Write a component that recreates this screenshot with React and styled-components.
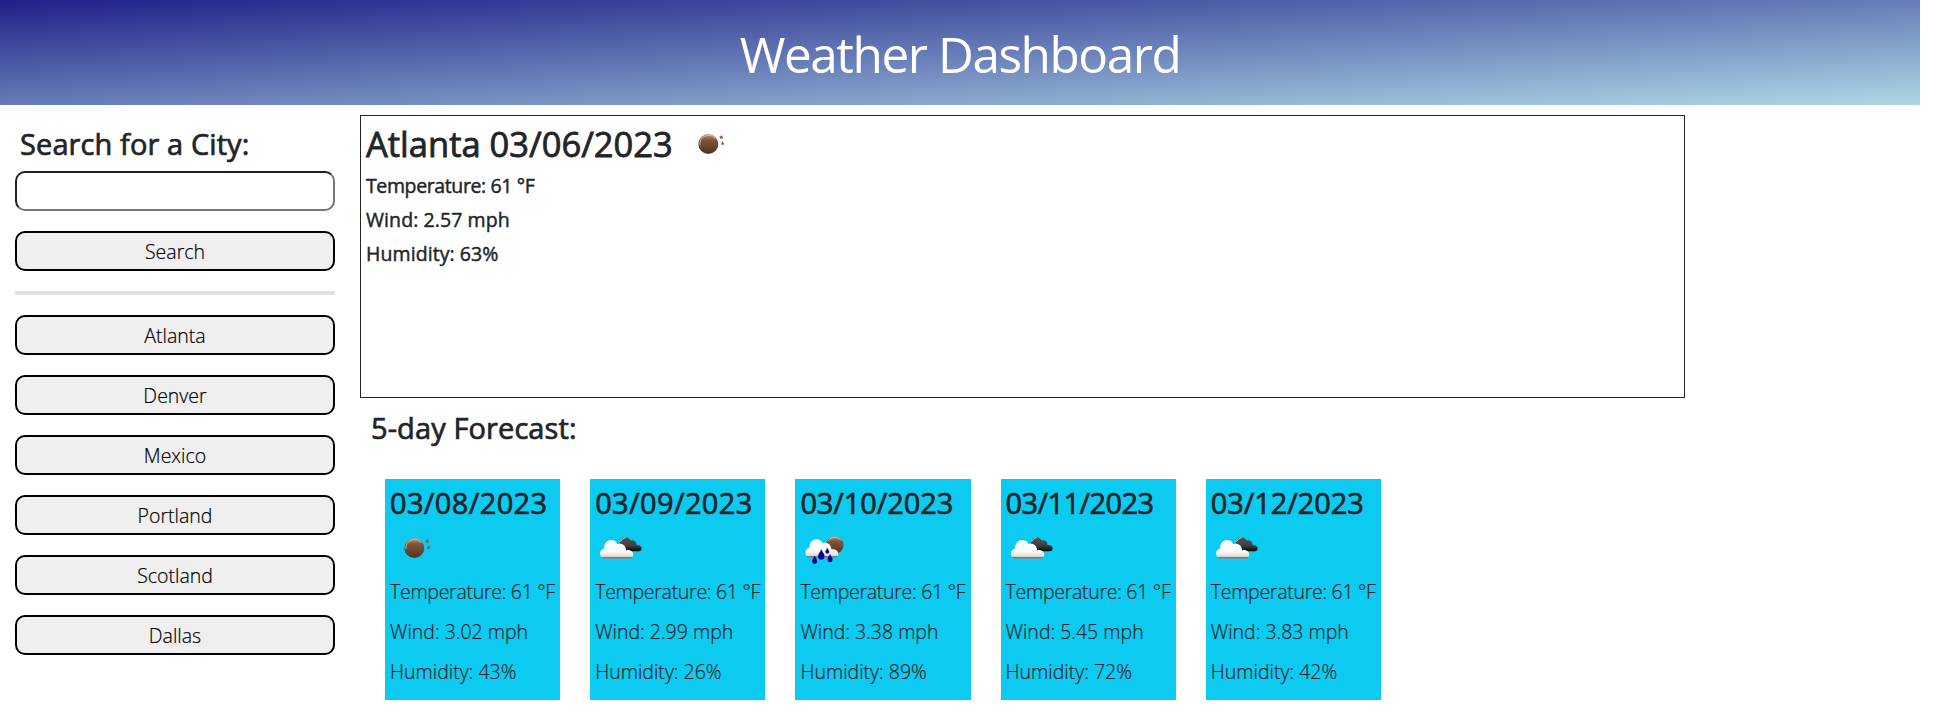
import React from "react";
import styled, { createGlobalStyle } from "styled-components";

const Global = createGlobalStyle`
  *, *::before, *::after { box-sizing: border-box; }
  body { margin: 0; background: #fff; color: #212529; font-family: "Segoe UI", "Open Sans", "Noto Sans", sans-serif; font-size: 20px; line-height: 30px; overflow: hidden; }
  h1, h2, h3, p { margin: 0; }
`;
const Header = styled.header`
  width: 1920px; height: 105px; display: flex; justify-content: center; padding-top: 25px;
  background: linear-gradient(to bottom right, #202088, lightblue);
`;
const Title = styled.h1`
  color: #fff; font-weight: 400; font-size: 49.5px; line-height: 59px; letter-spacing: -1.45px; white-space: nowrap;
`;
const Page = styled.div`display: flex; width: 1920px; align-items: flex-start;`;
const Sidebar = styled.aside`
  width: 320px; margin: 21px 0 0 15px; display: flex; flex-direction: column; gap: 20px;
`;
const Field = styled.label`display: flex; flex-direction: column; gap: 9px;`;
const Heading = styled.h2`
  font-weight: 400; font-size: 29px; line-height: 36px; white-space: nowrap;
  padding-left: 5px; letter-spacing: .1px; -webkit-text-stroke: .7px currentColor;
`;
const Input = styled.input`
  width: 100%; height: 40px; border: 2px inset #767676; border-radius: 10px; background: #fff; font: inherit; padding: 0 8px;
`;
const Button = styled.button`
  width: 100%; height: 40px; border: 2px solid #000; border-radius: 10px; background: #efefef; color: #000;
  font: inherit; font-size: 19.5px; line-height: 30px; padding: 1px 0 0; font-weight: 300; -webkit-text-stroke: .2px currentColor;
`;
const Rule = styled.hr`width: 100%; height: 4px; margin: 0; border: 0; background: #dee2e6;`;
const Main = styled.main`margin: 10px 0 0 25px; width: 1325px;`;
const Current = styled.section`height: 283px; border: 1px solid #212529; padding: 7px 5px;`;
const CurrentTop = styled.div`display: flex; align-items: center; height: 42px; margin-bottom: 4px; gap: 11px;`;
const City = styled.h2`font-size: 34.5px; line-height: 42px; font-weight: 400; white-space: nowrap; -webkit-text-stroke: .8px currentColor;`;
const Reading = styled.p`
  font-size: 19.5px; line-height: 34px; font-weight: 400; white-space: nowrap;
  letter-spacing: ${(p) => (p.$tight ? "-.38px" : ".08px")}; -webkit-text-stroke: .45px currentColor;
`;
const ForecastHead = styled.div`padding: 12px 0 0 6px;`;
const Days = styled.div`display: flex; gap: 30px; padding: 33px 0 0 25px;`;
const Day = styled.article`width: 175.2px; height: 221px; background: #0dcaf0; padding: 6px 5px;`;
const DayDate = styled.h3`
  font-size: 29px; line-height: 36px; margin-bottom: 2px; font-weight: 400; white-space: nowrap;
  letter-spacing: ${(p) => p.$track}px; -webkit-text-stroke: .7px currentColor;
`;
const Metrics = styled.div`margin-top: -1px;`;
const Metric = styled.p`
  font-size: 19.5px; line-height: 40px; font-weight: 300; white-space: nowrap;
  letter-spacing: ${(p) => (p.$tight ? "-.28px" : "0")}; -webkit-text-stroke: .2px currentColor;
`;
const Icon = styled.svg`display: block; width: 50px; height: 50px; flex: none;`;

const Defs = () => (
  <defs>
    <linearGradient id="moon" x1="0" y1="0" x2="0" y2="1">
      <stop offset="0" stopColor="#b89880" /><stop offset=".3" stopColor="#805539" /><stop offset="1" stopColor="#4d3322" />
    </linearGradient>
    <linearGradient id="white" x1="0" y1="0" x2="0" y2="1">
      <stop offset="0" stopColor="#fff" /><stop offset=".6" stopColor="#fbfbfb" /><stop offset=".88" stopColor="#ddd" /><stop offset=".9" stopColor="#777" /><stop offset="1" stopColor="#888" />
    </linearGradient>
    <linearGradient id="dark" x1="0" y1="0" x2="0" y2="1">
      <stop offset="0" stopColor="#555" /><stop offset=".6" stopColor="#3e3e3e" /><stop offset="1" stopColor="#080808" />
    </linearGradient>
  </defs>
);
const star = "M0-2.4 .7-.8 2.3-.7 1.1.4 1.5 2 0 1.1-1.5 2-1.1.4-2.3-.7-.7-.8Z";
const cloud = "M10 35.7C7 35.7 5 33.4 5 30.6C5 28 6.7 26.2 9 25.6C8.8 21 11.9 17 16 17C19.2 17 21.4 18.6 22.4 21.1C26.8 19.5 31 22.4 31.1 27.2C35 26.6 38.3 28.6 38.3 31.8C38.3 34.2 36.7 35.7 34.5 35.7Z";
const drop = "M0-5C.8-2.6 3-1 3 1.7A3 3 0 0 1-3 1.7C-3-1-.8-2.6 0-5Z";

const NightIcon = () => (
  <Icon viewBox="0 0 50 50"><Defs />
    <circle cx="24.3" cy="25" r="10" fill="url(#moon)" />
    <path d="M16 26A8.6 8.6 0 0 1 31.5 20" fill="none" stroke="#e6c9b5" strokeWidth=".8" />
    <path d={star} fill="#805a42" transform="translate(37.3 18.2)" />
    <path d={star} fill="#805a42" transform="translate(38.6 24.4) scale(.9)" />
  </Icon>
);
const CloudIcon = () => (
  <Icon viewBox="0 0 50 50"><Defs />
    <path d="M25 28.3C24 18 26 14.3 30.4 14.3C33 14.3 34.6 15.6 35.5 17.5C38.6 16.6 41.6 18.7 41.6 22C44.5 21.7 46.7 23 46.7 25.3C46.7 27.2 45.5 28.3 43.8 28.3Z" fill="url(#dark)" />
    <path d="M25.7 18.7C26.5 16.4 28.2 15 30.6 14.8" fill="none" stroke="#c4d4d8" strokeWidth="1" />
    <path d={cloud} fill="url(#white)" />
  </Icon>
);
const RainIcon = () => (
  <Icon viewBox="0 0 50 50"><Defs />
    <circle cx="34.7" cy="22" r="8.8" fill="url(#moon)" />
    <path d="M28.2 18A7.8 7.8 0 0 1 41 17.5" fill="none" stroke="#d9c5b8" strokeWidth=".8" />
    <path d={cloud} fill="url(#white)" transform="translate(.5 -.6) scale(.99)" />
    <g fill="#00009c" stroke="#000060" strokeWidth=".5">
      <path d={drop} transform="translate(14.7 37) scale(.78)" />
      <path d={drop} transform="translate(21.3 31.7)" />
      <path d={drop} transform="translate(30 35.3) scale(.78)" />
      <path d={drop} transform="translate(27.3 27.8) scale(.58)" />
    </g>
  </Icon>
);

const cities = ["Atlanta", "Denver", "Mexico", "Portland", "Scotland", "Dallas"];
const days = [
  { date: "03/08/2023", track: 0.35, Sky: NightIcon, wind: "3.02", humidity: 43 },
  { date: "03/09/2023", track: 0.35, Sky: CloudIcon, wind: "2.99", humidity: 26 },
  { date: "03/10/2023", track: -0.1, Sky: RainIcon, wind: "3.38", humidity: 89 },
  { date: "03/11/2023", track: -0.6, Sky: CloudIcon, wind: "5.45", humidity: 72 },
  { date: "03/12/2023", track: -0.1, Sky: CloudIcon, wind: "3.83", humidity: 42 },
];

export default function App() {
  return (
    <>
      <Global />
      <Header><Title>Weather Dashboard</Title></Header>
      <Page>
        <Sidebar>
          <Field><Heading as="span">Search for a City:</Heading><Input type="text" /></Field>
          <Button>Search</Button>
          <Rule />
          {cities.map((c) => <Button key={c}>{c}</Button>)}
        </Sidebar>
        <Main>
          <Current>
            <CurrentTop><City>Atlanta 03/06/2023</City><NightIcon /></CurrentTop>
            <Reading $tight>Temperature: 61 °F</Reading>
            <Reading>Wind: 2.57 mph</Reading>
            <Reading>Humidity: 63%</Reading>
          </Current>
          <ForecastHead><Heading>5-day Forecast:</Heading></ForecastHead>
          <Days>
            {days.map(({ date, track, Sky, wind, humidity }) => (
              <Day key={date}>
                <DayDate $track={track}>{date}</DayDate>
                <Sky />
                <Metrics>
                  <Metric $tight>Temperature: 61 °F</Metric>
                  <Metric>Wind: {wind} mph</Metric>
                  <Metric>Humidity: {humidity}%</Metric>
                </Metrics>
              </Day>
            ))}
          </Days>
        </Main>
      </Page>
    </>
  );
}
